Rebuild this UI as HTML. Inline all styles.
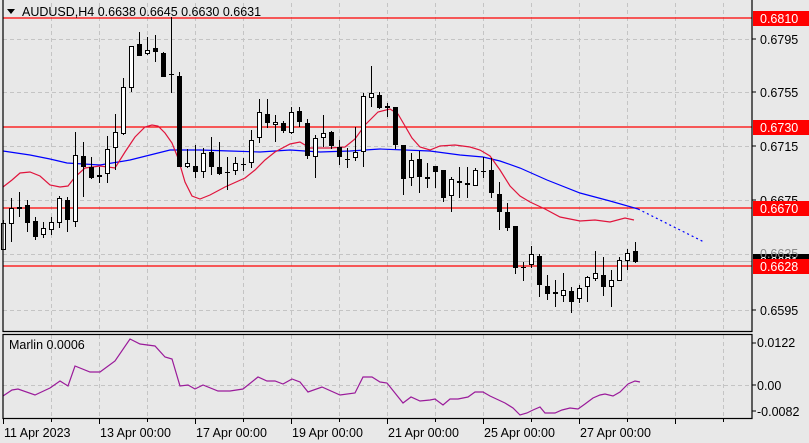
<!DOCTYPE html>
<html><head><meta charset="utf-8"><style>
html,body{margin:0;padding:0;background:#e8e8e8;}
svg{display:block;font-family:"Liberation Sans",sans-serif;}
</style></head><body>
<svg id="s" width="809" height="443" xmlns="http://www.w3.org/2000/svg">
<rect width="809" height="443" fill="#e8e8e8"/>
<g id="grid" stroke="#c4c4c4" stroke-dasharray="4,3" stroke-width="1"></g>
<line x1="3" y1="261.5" x2="752" y2="261.5" stroke="#bdbdbd"/>
<g stroke="#ff0000" stroke-width="1.3">
<line x1="3" y1="18" x2="752" y2="18"/>
<line x1="3" y1="127" x2="752" y2="127"/>
<line x1="3" y1="208" x2="752" y2="208"/>
<line x1="3" y1="266" x2="752" y2="266"/>
</g>
<g id="lines"></g>
<g id="candles"></g>
<g fill="none" stroke="#000" stroke-width="1.2">
<polyline points="3,0 3,331.5 752,331.5 752,0"/>
<rect x="3" y="334.5" width="749" height="84"/>
</g>
<g stroke="#000" id="ticks"></g>
<path d="M7,9 L15,9 L11,14 Z" fill="#000"/>
<text x="22" y="16" font-size="12.5" fill="#000">AUDUSD,H4  0.6638 0.6645 0.6630 0.6631</text>
<text x="9" y="349" font-size="12.5" fill="#000">Marlin 0.0006</text>
<g font-size="12.5" fill="#000">
<text x="760" y="44">0.6795</text>
<text x="760" y="97">0.6755</text>
<text x="760" y="151">0.6715</text>
<text x="760" y="205">0.6675</text>
<text x="760" y="315">0.6595</text>
<text x="757" y="347">0.0122</text>
<text x="757" y="390">0.00</text>
<text x="757" y="416">-0.0082</text>
</g>
<g stroke="#000"><line x1="752" y1="39" x2="756" y2="39"/><line x1="752" y1="92" x2="756" y2="92"/><line x1="752" y1="146" x2="756" y2="146"/><line x1="752" y1="200" x2="756" y2="200"/><line x1="752" y1="310" x2="756" y2="310"/><line x1="752" y1="343" x2="756" y2="343"/><line x1="752" y1="385" x2="756" y2="385"/><line x1="752" y1="411" x2="756" y2="411"/></g>
<rect x="753" y="254" width="56" height="14" fill="#000"/>
<text x="760" y="258" font-size="12.5" fill="#888">0.6635</text>
<text x="760" y="266" font-size="12.5" fill="#fff">0.6631</text>
<g fill="#ff0000">
<rect x="753" y="11" width="56" height="15"/>
<rect x="753" y="120" width="56" height="15"/>
<rect x="753" y="201" width="56" height="15"/>
<rect x="753" y="259" width="56" height="15"/>
</g>
<g font-size="12.5" fill="#fff">
<text x="760" y="23">0.6810</text>
<text x="760" y="132">0.6730</text>
<text x="760" y="213">0.6670</text>
<text x="760" y="271">0.6628</text>
</g>
<g font-size="12.5" fill="#000">
<text x="4" y="437">11 Apr 2023</text>
<text x="100" y="437">13 Apr 00:00</text>
<text x="196" y="437">17 Apr 00:00</text>
<text x="292" y="437">19 Apr 00:00</text>
<text x="388" y="437">21 Apr 00:00</text>
<text x="484" y="437">25 Apr 00:00</text>
<text x="580" y="437">27 Apr 00:00</text>
</g>
</svg>
<script>
var NS="http://www.w3.org/2000/svg";
function el(p,t,a){var e=document.createElementNS(NS,t);for(var k in a)e.setAttribute(k,a[k]);p.appendChild(e);return e;}
var g=document.getElementById("grid");
for(var k=1;k<=15;k++){var x=3+48*k+0.5;if(x<752){el(g,"line",{x1:x,y1:3,x2:x,y2:331});el(g,"line",{x1:x,y1:335,x2:x,y2:418});}}
[39,92,146,200,254,310].forEach(function(y){el(g,"line",{x1:3,y1:y+.5,x2:752,y2:y+.5});});
el(g,"line",{x1:3,y1:385.5,x2:752,y2:385.5});
var tk=document.getElementById("ticks");
for(var k=0;k<=15;k++){var x=3+48*k+0.5;if(x<752)el(tk,"line",{x1:x,y1:419,x2:x,y2:k%2==0?424:422});}
var C=[
[223,250,"W",220,250],[208,224,"W",198,242],[207,209,"B",192,217],[205,223,"B",200,232],[221,237,"B",217,240],
[228,235,"W",222,238],[222,230,"W",217,235],[198,223,"W",196,228],[200,220,"B",197,232],[155,222,"W",132,227],
[156,167,"B",142,197],[167,178,"B",157,179],[175,177,"W",167,183],[149,174,"W",136,183],[132,148,"W",114,170],
[87,134,"W",78,135],[46,88,"W",46,92],[44,56,"B",32,56],[50,54,"W",37,55],[48,52,"B",35,62],
[53,77,"B",52,77],[74,74,"D",17,93],[76,167,"B",72,167],[163,167,"W",149,168],[166,172,"B",145,178],
[153,172,"W",148,178],[152,167,"B",137,175],[167,174,"B",142,175],[172,172,"D",157,190],[163,171,"W",157,175],
[164,164,"D",158,171],[140,163,"W",130,168],[112,138,"W",99,143],[114,123,"B",99,128],[122,125,"W",115,142],
[123,131,"B",121,133],[112,133,"W",107,134],[111,122,"B",107,127],[123,156,"B",119,159],[138,157,"W",135,178],
[133,138,"W",115,147],[132,146,"B",131,149],[147,157,"B",140,165],[159,159,"D",148,168],[152,158,"W",127,161],
[96,152,"W",93,167],[93,98,"W",66,107],[95,108,"B",92,109],[106,108,"B",103,117],[107,145,"B",107,149],
[145,179,"B",145,195],[160,178,"W",153,186],[159,177,"B",151,193],[177,179,"B",163,188],[166,172,"B",166,188],
[170,198,"B",170,202],[179,196,"W",177,212],[181,183,"B",167,198],[183,185,"W",167,198],[170,186,"W",168,186],
[171,171,"D",157,178],[170,193,"B",158,198],[194,212,"B",182,230],[212,228,"B",203,231],[226,268,"B",226,274],
[267,267,"D",262,281],[254,265,"W",246,268],[256,285,"B",254,297],[286,294,"B",275,300],[292,294,"B",280,307],
[290,296,"W",273,302],[291,302,"B",287,313],[288,299,"W",285,303],[277,287,"W",276,302],[273,279,"W",251,281],
[275,287,"B",257,296],[280,287,"W",270,307],[260,281,"W",257,281],[253,261,"W",249,270],[251,262,"B",242,263]];
var cg=document.getElementById("candles");
C.forEach(function(c,i){var x=3+8*i;
 el(cg,"line",{x1:x+.5,y1:c[3],x2:x+.5,y2:c[4],stroke:"#000","stroke-width":1});
 if(c[2]=="D"){el(cg,"line",{x1:x-2,y1:c[0]+.5,x2:x+3,y2:c[0]+.5,stroke:"#000"});}
 else{var h=Math.max(c[1]-c[0],2);
  if(c[2]=="B")el(cg,"rect",{x:x-2,y:c[0],width:5,height:h,fill:"#000"});
  else el(cg,"rect",{x:x-1.5,y:c[0]+.5,width:4,height:h-1,fill:"#fff",stroke:"#000","stroke-width":1});}
});
var lg=document.getElementById("lines");
function pl(pts,col,extra){var a={points:pts,fill:"none",stroke:col,"stroke-width":1.2};for(var k in extra)a[k]=extra[k];el(lg,"polyline",a);}
pl("3,151 30,155 50,159 67,163 100,165 130,160 150,155 170,150 200,150 230,151 260,152 290,150 320,152 350,151 380,149 430,151 460,155 483,157 500,161 520,168 547,180 580,193 610,201 638,209","#0000ff");
pl("638,209 704,242","#0000ff",{"stroke-dasharray":"2,3"});
pl("3,187 12,180 20,173 30,172 40,176 50,185 60,187 68,186 75,177 85,168 100,166 115,168 125,152 135,137 145,127 152,125 158,126 165,133 172,143 178,158 185,182 192,196 200,199 210,195 225,187 245,178 255,170 265,160 275,152 290,144 300,142 310,148 330,148 345,147 355,139 365,125 378,112 390,109 398,114 405,126 412,138 420,147 430,150 440,146 455,145 470,147 480,150 490,156 500,170 510,186 520,196 530,202 545,209 560,217 580,221 595,220 610,222 625,218 634,220","#e0143c");
pl("3,396 12,390 18,389 35,395 50,388 60,381 68,386 75,366 90,372 100,372 115,361 130,339 140,344 155,346 165,357 172,359 180,386 188,385 195,389 203,385 218,391 230,391 243,389 258,377 267,381 275,381 283,384 292,379 300,382 308,392 322,387 340,395 355,393 363,377 372,377 380,382 387,383 403,403 411,397 420,401 430,400 435,399 443,405 450,399 458,399 468,397 475,392 483,392 490,396 505,403 513,408 520,415 527,413 533,410 540,407 545,413 555,413 562,410 570,408 578,409 585,404 593,398 600,395 605,394 613,396 620,392 628,384 635,381 640,382","#9a1a9a");
</script>
</body></html>
